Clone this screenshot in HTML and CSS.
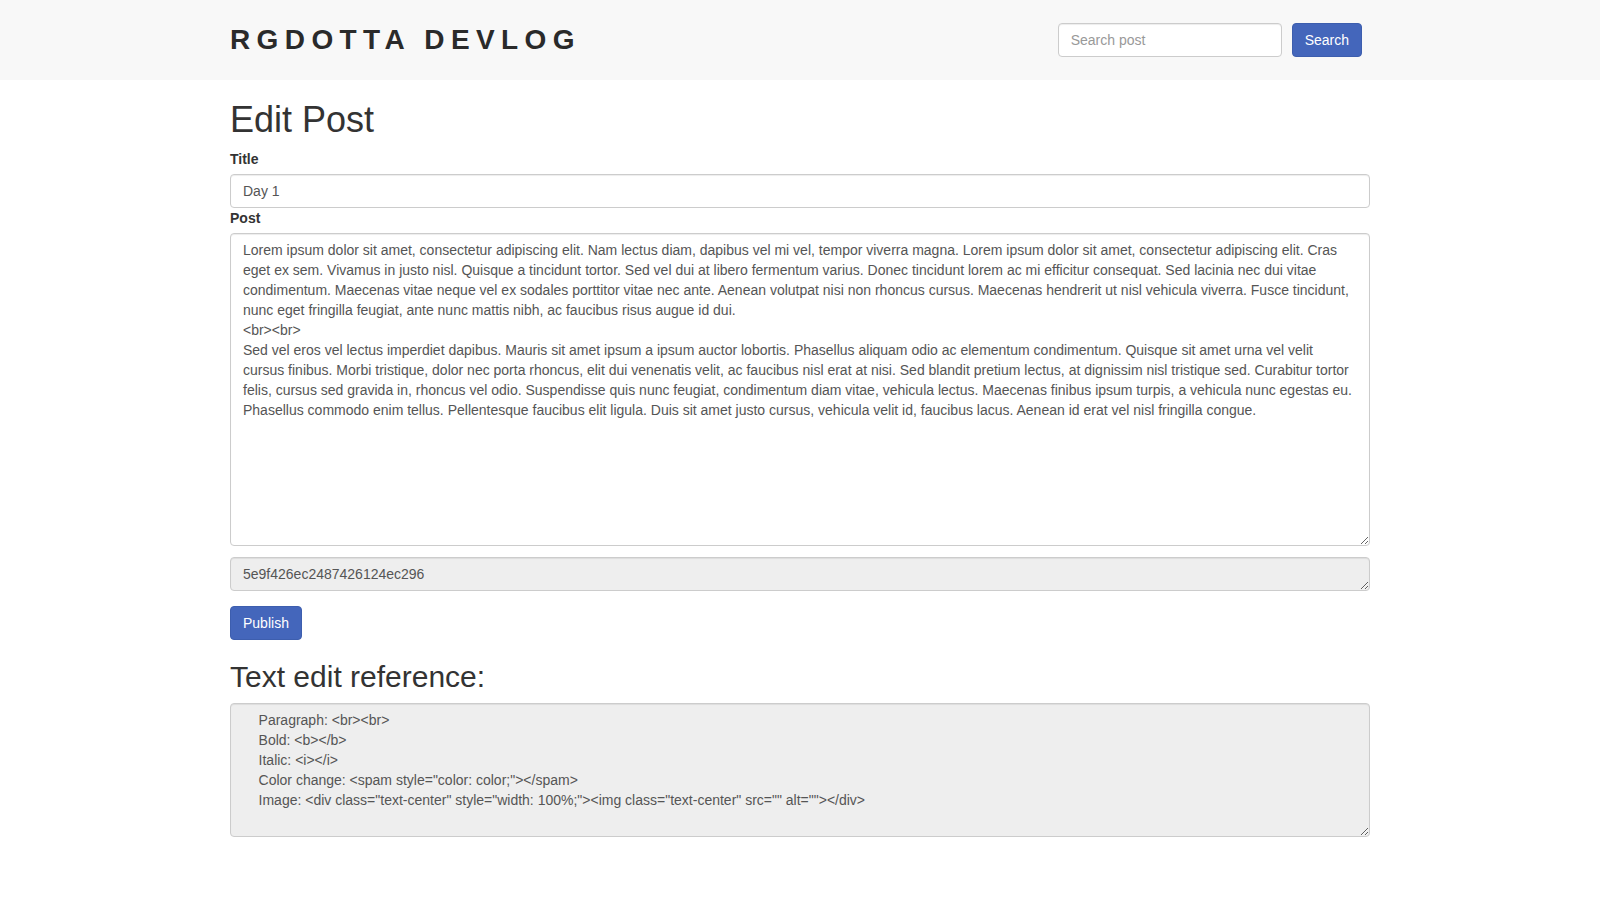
FILE: index.html
```html
<!DOCTYPE html>
<html lang="en">
<head>
<meta charset="utf-8">
<title>Edit Post - RGDOTTA DEVLOG</title>
<link rel="stylesheet" href="styles.css">
</head>
<body>
<header class="navbar">
  <div class="container nav-inner">
    <a class="brand" href="#">RGDOTTA DEVLOG</a>
    <form class="search-form">
      <input class="form-control search-input" type="text" placeholder="Search post">
      <button class="btn btn-primary" type="button">Search</button>
    </form>
  </div>
</header>
<main class="container">
  <h1 class="page-title">Edit Post</h1>
  <form class="edit-form">
    <label class="field-label" for="title">Title</label>
    <input class="form-control" id="title" type="text" value="Day 1">
    <label class="field-label" for="post">Post</label>
    <textarea class="form-control post-area" id="post" rows="15">Lorem ipsum dolor sit amet, consectetur adipiscing elit. Nam lectus diam, dapibus vel mi vel, tempor viverra magna. Lorem ipsum dolor sit amet, consectetur adipiscing elit. Cras eget ex sem. Vivamus in justo nisl. Quisque a tincidunt tortor. Sed vel dui at libero fermentum varius. Donec tincidunt lorem ac mi efficitur consequat. Sed lacinia nec dui vitae condimentum. Maecenas vitae neque vel ex sodales porttitor vitae nec ante. Aenean volutpat nisi non rhoncus cursus. Maecenas hendrerit ut nisl vehicula viverra. Fusce tincidunt, nunc eget fringilla feugiat, ante nunc mattis nibh, ac faucibus risus augue id dui.
&lt;br&gt;&lt;br&gt;
Sed vel eros vel lectus imperdiet dapibus. Mauris sit amet ipsum a ipsum auctor lobortis. Phasellus aliquam odio ac elementum condimentum. Quisque sit amet urna vel velit cursus finibus. Morbi tristique, dolor nec porta rhoncus, elit dui venenatis velit, ac faucibus nisl erat at nisi. Sed blandit pretium lectus, at dignissim nisl tristique sed. Curabitur tortor felis, cursus sed gravida in, rhoncus vel odio. Suspendisse quis nunc feugiat, condimentum diam vitae, vehicula lectus. Maecenas finibus ipsum turpis, a vehicula nunc egestas eu. Phasellus commodo enim tellus. Pellentesque faucibus elit ligula. Duis sit amet justo cursus, vehicula velit id, faucibus lacus. Aenean id erat vel nisl fringilla congue.</textarea>
    <textarea class="form-control hash-area" rows="1" readonly>5e9f426ec2487426124ec296</textarea>
    <button class="btn btn-primary publish" type="button">Publish</button>
  </form>
  <h2 class="section-title">Text edit reference:</h2>
  <textarea class="form-control ref-area" rows="6" readonly>    Paragraph: &lt;br&gt;&lt;br&gt;
    Bold: &lt;b&gt;&lt;/b&gt;
    Italic: &lt;i&gt;&lt;/i&gt;
    Color change: &lt;spam style="color: color;"&gt;&lt;/spam&gt;
    Image: &lt;div class="text-center" style="width: 100%;"&gt;&lt;img class="text-center" src="" alt=""&gt;&lt;/div&gt;
    </textarea>
</main>
</body>
</html>
```

FILE: styles.css
```css
* {
  box-sizing: border-box;
}

html, body {
  margin: 0;
  padding: 0;
}

body {
  font-family: "Liberation Sans", Arial, Helvetica, sans-serif;
  font-size: 14px;
  line-height: 20px;
  color: #333;
  background: #fff;
}

.container {
  width: 1170px;
  margin: 0 auto;
  padding: 0 15px;
}

.navbar {
  background: #f8f8f8;
}

.nav-inner {
  height: 80px;
  display: flex;
  align-items: center;
  justify-content: space-between;
}

.brand {
  font-size: 28px;
  font-weight: bold;
  letter-spacing: 6.4px;
  color: #2a2a2a;
  text-decoration: none;
  line-height: 30px;
}

.search-form {
  display: flex;
  align-items: center;
  gap: 10px;
  padding-right: 8px;
}

.form-control {
  display: block;
  width: 100%;
  height: 34px;
  padding: 6px 12px;
  font-family: inherit;
  font-size: 14px;
  line-height: 20px;
  color: #555;
  background: #fff;
  border: 1px solid #ccc;
  border-radius: 4px;
  box-shadow: inset 0 1px 1px rgba(0, 0, 0, 0.075);
  margin: 0;
}

.form-control::placeholder {
  color: #999;
}

.search-input {
  width: 224px;
}

.btn {
  display: inline-block;
  height: 34px;
  padding: 6px 12px;
  font-family: inherit;
  font-size: 14px;
  line-height: 20px;
  border: 1px solid transparent;
  border-radius: 4px;
  cursor: pointer;
}

.btn-primary {
  color: #fff;
  background: #4466bb;
  border-color: #3d5eae;
}

.page-title {
  font-size: 36px;
  font-weight: 500;
  line-height: 39.6px;
  margin: 20px 0 9px;
}

.edit-form {
  display: flex;
  flex-direction: column;
  align-items: flex-start;
}

.field-label {
  font-weight: bold;
  margin-bottom: 5px;
}

.post-area {
  height: 313px;
  resize: vertical;
}

.hash-area {
  margin-top: 11px;
  background: #eee;
  resize: vertical;
  overflow: hidden;
}

.publish {
  margin-top: 15px;
}

.section-title {
  font-size: 30px;
  font-weight: 500;
  line-height: 33px;
  margin: 20px 0 10px;
}

.ref-area {
  height: 134px;
  background: #eee;
  resize: vertical;
  white-space: pre-wrap;
}
```
